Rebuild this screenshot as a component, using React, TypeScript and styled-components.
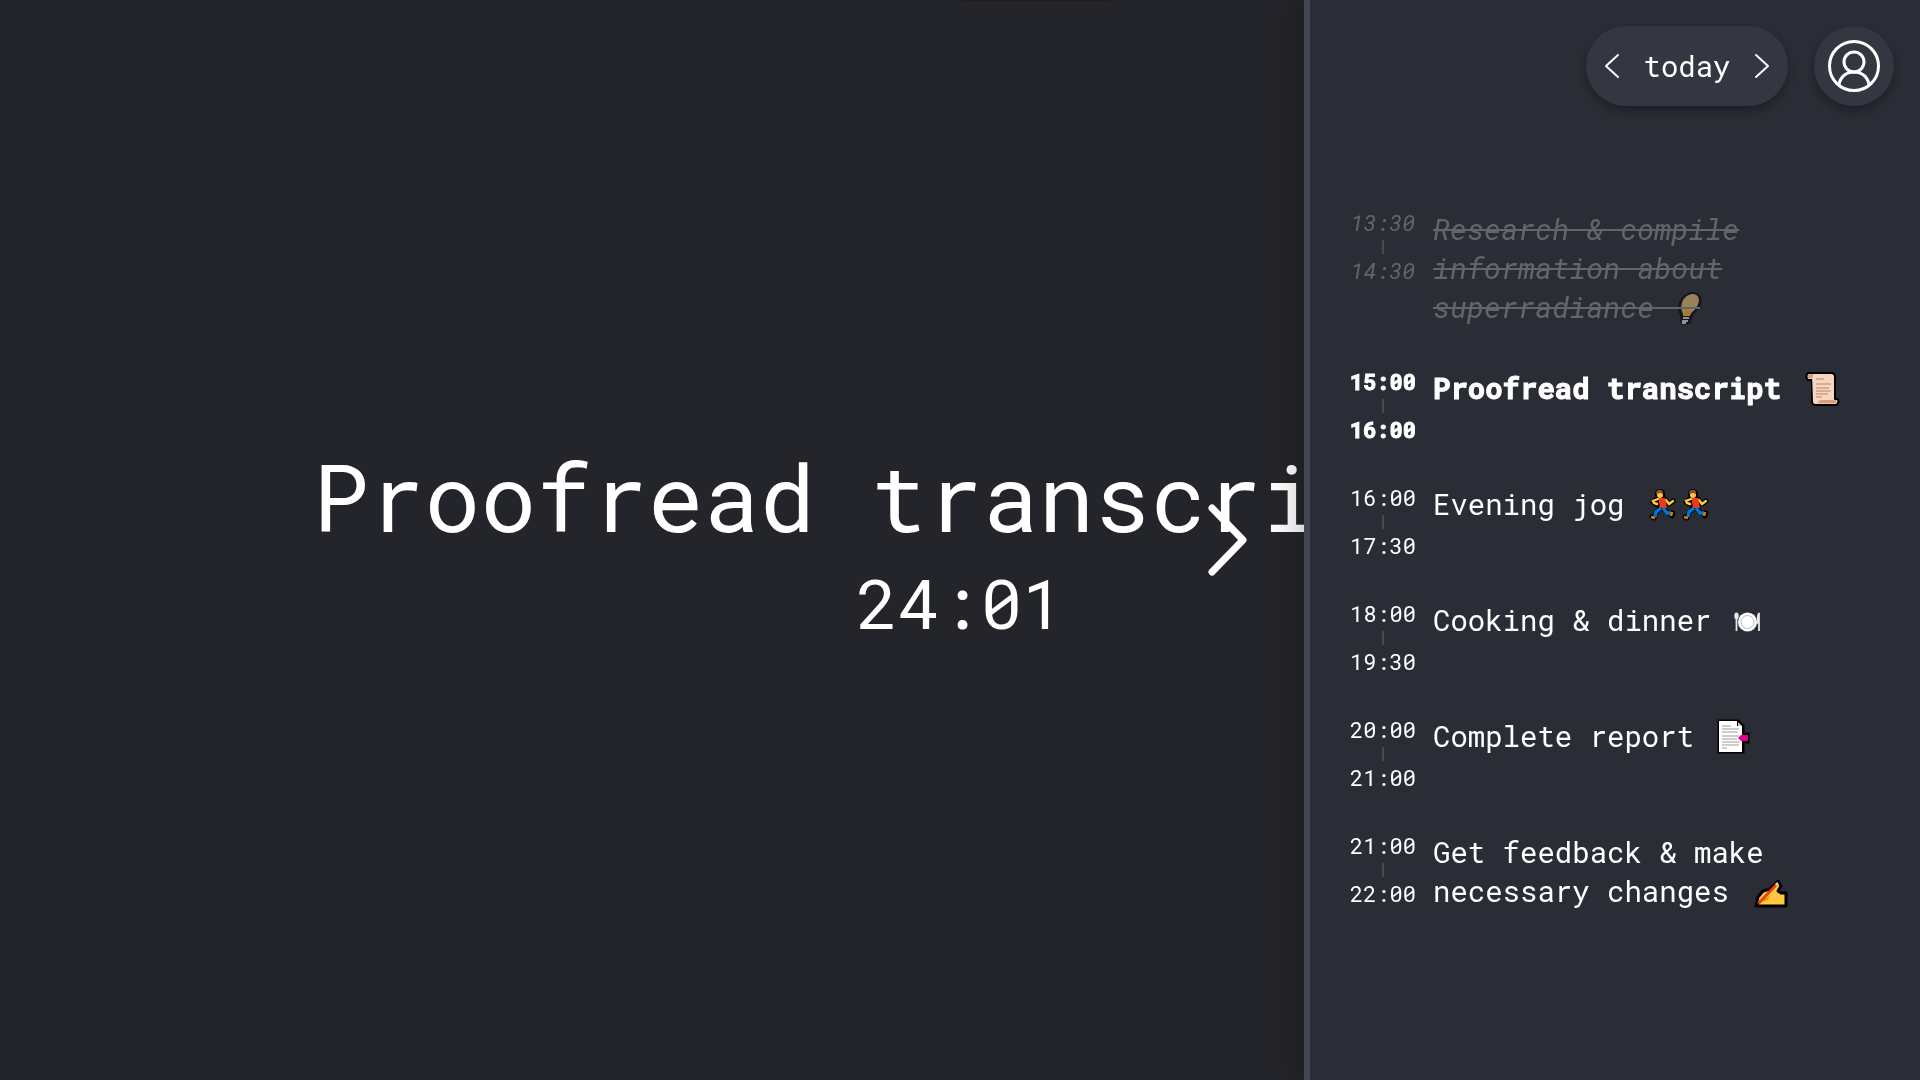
import React from "react";
import styled, { createGlobalStyle, css } from "styled-components";

const MONO = '"Roboto Mono", "DejaVu Sans Mono", "Liberation Mono", monospace';

const GlobalStyle = createGlobalStyle`
  *, *::before, *::after { box-sizing: border-box; }
  body {
    margin: 0;
    background: #24252a;
    color: #fff;
    font-family: ${MONO};
    font-weight: 450;
    overflow: hidden;
  }
  button {
    font: inherit;
    color: inherit;
    border: 0;
    padding: 0;
    background: none;
    cursor: pointer;
  }
`;

const Stage = styled.main`
  min-height: 100vh;
  padding-top: 4px;
  display: flex;
  flex-direction: column;
  align-items: center;
  justify-content: center;
  overflow: hidden;
  white-space: nowrap;
`;

const TopHandle = styled.div`
  position: absolute;
  top: 0;
  left: calc(50% + 2px);
  width: 148px;
  height: 1px;
  background: #1e1e1f;
`;

const CurrentTask = styled.h1`
  margin: 0;
  font-size: 93px;
  font-weight: 450;
  line-height: 122px;
`;

const HeadingScroll = styled.span`
  display: inline-block;
  width: 122px;
`;

const Countdown = styled.p`
  margin: 0;
  font-size: 69px;
  line-height: 92px;
`;

const Drawer = styled.aside`
  position: fixed;
  top: 0;
  right: 0;
  bottom: 0;
  width: 616px;
  padding: 26px 26px 40px 40px;
  border-left: 6px solid #444651;
  background: #2b2d36;
  box-shadow: 0 0 40px rgba(0, 0, 0, 0.3);
`;

const DrawerToggle = styled.button`
  position: absolute;
  top: 50%;
  right: 100%;
  width: 122px;
  height: 80px;
  transform: translateY(-50%);
  display: flex;
  align-items: center;
  padding-left: 14px;
`;

const Toolbar = styled.header`
  display: flex;
  justify-content: flex-end;
  gap: 26px;
`;

const raised = css`
  height: 80px;
  border-radius: 40px;
  background: #343741;
  box-shadow: 0 5px 10px rgba(0, 0, 0, 0.3);
`;

const DayPicker = styled.nav`
  ${raised}
  width: 202px;
  padding: 0 16px;
  display: flex;
  align-items: center;
  justify-content: space-between;
  font-size: 29px;
`;

const StepButton = styled.button`
  display: flex;
  padding: 8px 2px;
`;

const AccountButton = styled.button`
  ${raised}
  width: 80px;
  display: grid;
  place-items: center;
`;

const Agenda = styled.ol`
  list-style: none;
  margin: 104px 0 0;
  padding: 0;
  display: flex;
  flex-direction: column;
  gap: 42px;
`;

type State = "done" | "active" | "upcoming";

const Entry = styled.li<{ $state: State }>`
  display: grid;
  grid-template-columns: 66px 1fr;
  column-gap: 17px;
  align-items: start;
  ${(p) =>
    p.$state === "active" &&
    css`
      font-weight: 700;
      -webkit-text-stroke: 1px #fff;
    `}
  ${(p) =>
    p.$state === "done" &&
    css`
      color: #646569;
      font-style: italic;
      font-weight: 400;
    `}
`;

const Span = styled.div`
  display: flex;
  flex-direction: column;
  align-items: center;
  gap: 4px;
  font-size: 22px;
  line-height: 26px;
`;

const Tick = styled.i`
  width: 2px;
  height: 14px;
  background: #484a50;
`;

const Title = styled.div<{ $state: State }>`
  font-size: 29px;
  line-height: 39px;
  text-decoration: ${(p) => (p.$state === "done" ? "line-through" : "none")};
  text-decoration-thickness: 2px;
`;

const Glyph = styled.svg`
  height: 35px;
  vertical-align: -8px;
  overflow: visible;

  &:first-of-type {
    margin-left: 2px;
  }
`;

function Bulb() {
  return (
    <Glyph viewBox="0 0 27 35" aria-label="light bulb">
      <g transform="translate(2 0)">
        <path
          d="M7 24C3 16 6 5 17 3c9 0 9 9 5 14-3 4-6 5-7 10l-1 4-6 1-1-3z"
          fill="#15171c"
          stroke="#15171c"
          strokeWidth="4"
          strokeLinejoin="round"
        />
        <path d="M8 23C4 15 7 5 17 3c9 0 8 9 4 14-3 4-5 4-6 8H8z" fill="#97825a" />
        <path d="M9 19l2 1 1-1 2 1 2-1-2 6H9z" fill="#a67c22" />
        <path d="M8 27h6M7 30h6M7 32h4" stroke="#8f9196" strokeWidth="2" />
      </g>
      <path d="M-2 17h29" stroke="#646569" strokeWidth="2" />
    </Glyph>
  );
}

function Scroll() {
  return (
    <Glyph viewBox="0 1 40 35" aria-label="scroll">
      <path d="M8 2h23c3 0 4 2 4 4v22h2c2 0 2 5-1 6H16c-3 0-4-2-4-4V9H8C6 8 6 3 8 2z" fill="#eec9b4" stroke="#000" strokeWidth="2" strokeLinejoin="round" />
      <path d="M12 3h18c3 0 4 2 4 4v22H19c-2 0 0 4-3 4-2 0-3-1-3-3z" fill="#f6d5c3" />
      <path d="M8 3h5v4H8zM20 29h16v3H18z" fill="#d6a183" />
      <path d="M16 8h8M16 13h15M16 17h13M16 20h15M16 23h12M16 26h6" stroke="#cfa183" strokeWidth="1.4" />
    </Glyph>
  );
}

function Runner() {
  return (
    <Glyph viewBox="0 0 33 35" aria-label="runner">
      <g fill="none" stroke="#000" strokeWidth="5" strokeLinejoin="round" strokeLinecap="round">
        <circle cx="16" cy="6" r="2.5" />
        <path d="M13 11l-4 3 3 2M21 11l4 5 4-3M13 11l3 9M20 11l1 7" />
        <path d="M16 20l-4 5-2 5-2-1M19 20l5 5h5l-1 3" />
      </g>
      <path d="M14 11l-5 2 1 2 3 1M22 12l3 4 4-3" fill="none" stroke="#ffc83d" strokeWidth="2.4" strokeLinecap="round" />
      <path d="M15 10h6l2 10h-7l-1-6z" fill="#f03a17" />
      <path d="M17 20l-5 4-1 5M19 20l4 5h4" fill="none" stroke="#0078d7" strokeWidth="3.4" />
      <path d="M7 29l4 1M28 24l-1 4" stroke="#d67d00" strokeWidth="2.6" />
      <circle cx="16" cy="7" r="3" fill="#ffc83d" />
      <path d="M12 6c0-6 8-5 7 0l-3-1z" fill="#8e562e" />
    </Glyph>
  );
}

function Plate() {
  return (
    <Glyph viewBox="0 1 32 35" aria-label="plate with cutlery">
      <circle cx="16.5" cy="19" r="9.5" fill="#fff" />
      <circle cx="16.5" cy="19" r="6.5" fill="#fff" stroke="#a9abb0" strokeWidth="0.8" />
      <ellipse cx="5.5" cy="13" rx="2.2" ry="3.4" fill="#e6e7e9" />
      <path d="M5.5 13v15" stroke="#e6e7e9" strokeWidth="1.8" />
      <path d="M28 28V10q-2 4-1 10h1" fill="none" stroke="#e6e7e9" strokeWidth="1.8" />
    </Glyph>
  );
}

function Report() {
  return (
    <Glyph viewBox="0 1 40 35" aria-label="bookmark tabs">
      <path d="M6 2h19l5 5v8h5v8h-5v10H6z" fill="#000" stroke="#000" strokeWidth="3" />
      <path d="M6 2h18v5h5v26H6z" fill="#fff" />
      <path d="M25 3l4 4h-4z" fill="#ccc" />
      <path d="M25 19l3-3h7v6h-7z" fill="#e3008c" />
      <path d="M9 7h9M9 10h17M9 13h16M9 17h17M9 20h15M9 23h17M9 26h17M9 29h5" stroke="#bdbdbd" strokeWidth="1.4" />
    </Glyph>
  );
}

function Writing() {
  return (
    <Glyph viewBox="0 0 40 35" aria-label="writing hand">
      <path d="M8 31l2-9 5-6 7-2 8-8 3 5-3 5 3 2h5v13z" fill="#ffc83d" stroke="#000" strokeWidth="3" strokeLinejoin="round" />
      <path d="M12 26l10-5-2 4-8 2z" fill="#d99a00" />
      <path d="M10 29L29 9" stroke="#f03a17" strokeWidth="2.6" />
      <path d="M28 10l2-2" stroke="#ccc" strokeWidth="2.6" />
      <path d="M7 32l3-4 2 3z" fill="#000" />
    </Glyph>
  );
}

interface Task {
  from: string;
  to: string;
  title: string;
  state: State;
  icon: React.ReactNode;
}

const tasks: Task[] = [
  { from: "13:30", to: "14:30", title: "Research & compile information about superradiance", state: "done", icon: <Bulb /> },
  { from: "15:00", to: "16:00", title: "Proofread transcript", state: "active", icon: <Scroll /> },
  { from: "16:00", to: "17:30", title: "Evening jog", state: "upcoming", icon: <><Runner /><Runner /></> },
  { from: "18:00", to: "19:30", title: "Cooking & dinner", state: "upcoming", icon: <Plate /> },
  { from: "20:00", to: "21:00", title: "Complete report", state: "upcoming", icon: <Report /> },
  { from: "21:00", to: "22:00", title: "Get feedback & make necessary changes", state: "upcoming", icon: <Writing /> },
];

export default function App() {
  return (
    <>
      <GlobalStyle />
      <TopHandle />
      <Stage>
        <CurrentTask>
          Proofread transcript <HeadingScroll><Scroll /></HeadingScroll>
        </CurrentTask>
        <Countdown>24:01</Countdown>
      </Stage>
      <Drawer>
        <DrawerToggle aria-label="Hide agenda">
          <svg width="48" height="80" viewBox="0 0 48 80" fill="none" stroke="#fff" strokeWidth="7" strokeLinecap="round" strokeLinejoin="round">
            <path d="M10 8l31 32-31 32" />
          </svg>
        </DrawerToggle>
        <Toolbar>
          <DayPicker aria-label="Day">
            <StepButton aria-label="Previous day">
              <svg width="16" height="26" viewBox="0 0 16 26" fill="none" stroke="#fff" strokeWidth="2" strokeLinecap="round" strokeLinejoin="round">
                <path d="M14 2L2 13l12 11" />
              </svg>
            </StepButton>
            <span>today</span>
            <StepButton aria-label="Next day">
              <svg width="16" height="26" viewBox="0 0 16 26" fill="none" stroke="#fff" strokeWidth="2" strokeLinecap="round" strokeLinejoin="round">
                <path d="M2 2l12 11L2 24" />
              </svg>
            </StepButton>
          </DayPicker>
          <AccountButton aria-label="Account">
            <svg width="52" height="52" viewBox="0 0 52 52" fill="none" stroke="#fff" strokeWidth="3">
              <circle cx="26" cy="26" r="24.5" />
              <circle cx="26" cy="22" r="10" />
              <path d="M11 45c1-8 7-13 15-13s14 5 15 13" />
            </svg>
          </AccountButton>
        </Toolbar>
        <Agenda>
          {tasks.map((t) => (
            <Entry key={t.from} $state={t.state}>
              <Span>
                <time>{t.from}</time>
                <Tick />
                <time>{t.to}</time>
              </Span>
              <Title $state={t.state}>
                {t.title} {t.icon}
              </Title>
            </Entry>
          ))}
        </Agenda>
      </Drawer>
    </>
  );
}
